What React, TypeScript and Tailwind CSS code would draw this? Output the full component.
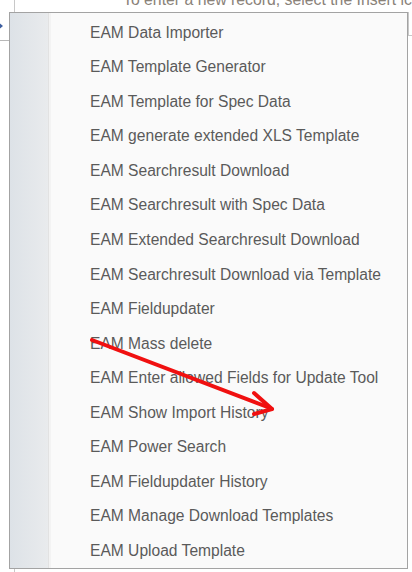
import React from 'react'

const items = [
  'EAM Data Importer',
  'EAM Template Generator',
  'EAM Template for Spec Data',
  'EAM generate extended XLS Template',
  'EAM Searchresult Download',
  'EAM Searchresult with Spec Data',
  'EAM Extended Searchresult Download',
  'EAM Searchresult Download via Template',
  'EAM Fieldupdater',
  'EAM Mass delete',
  'EAM Enter allowed Fields for Update Tool',
  'EAM Show Import History',
  'EAM Power Search',
  'EAM Fieldupdater History',
  'EAM Manage Download Templates',
  'EAM Upload Template',
]

export default function App() {
  return (
    <div className="relative w-[412px] h-[572px] bg-white overflow-hidden" style={{ fontFamily: '"Liberation Sans", Arial, sans-serif' }}>
      {/* page behind the menu */}
      <div className="flex h-full">
        <div className="w-[15px] shrink-0 border-r border-[#c8c8c8] flex flex-col">
          <div className="h-[21px]" />
          <div className="w-0 h-0 -ml-[3px] border-y-[5px] border-y-transparent border-l-[6px] border-l-[#3d5fa0]" />
          <div className="h-[9px]" />
          <div className="w-[10px] border-b border-[#b8b8b8]" />
        </div>
        <div className="flex-1 min-w-0 flex flex-col">
          <div className="h-[12px] overflow-visible pl-[108px] whitespace-nowrap text-[15.8px] leading-[18px] -mt-[9px] text-[#8a8279]">
            To enter a new record, select the Insert icon
          </div>
          <div className="flex justify-end mt-[9px]">
            <div className="w-[4px] h-[24px] border-l border-b border-[#c8c8c8]" />
          </div>
        </div>
      </div>

      {/* context menu */}
      <div className="absolute left-[9px] top-[12px] w-[399px] h-[557px] border border-[#a3a3a3] bg-[#fafafa] flex">
        <div className="w-[38px] bg-gradient-to-r from-[#dde2e7] to-[#e9ebed] shrink-0" />
        <div className="w-[3px] bg-[#f3f3f3] border-l border-[#e2e2e2] shrink-0" />
        <div className="flex-1 flex flex-col pt-[2px]">
          {items.map((t) => (
            <div key={t} className="h-[34.8px] flex items-center pl-[39px] text-[15.6px] text-[#5a5a5a] whitespace-nowrap">
              {t}
            </div>
          ))}
        </div>
      </div>

      {/* red annotation arrow */}
      <svg className="absolute left-0 top-0" width="412" height="572">
        <line x1="92" y1="340" x2="270" y2="408" stroke="#f01010" strokeWidth="4" strokeLinecap="round" />
        <line x1="272" y1="409" x2="254" y2="393" stroke="#f01010" strokeWidth="4" strokeLinecap="round" />
        <line x1="272" y1="409" x2="254" y2="414" stroke="#f01010" strokeWidth="4" strokeLinecap="round" />
      </svg>
    </div>
  )
}
